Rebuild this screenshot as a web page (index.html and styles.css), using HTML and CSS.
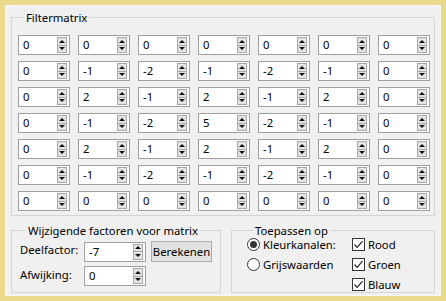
FILE: index.html
```html
<!DOCTYPE html>
<html lang="nl">
  <head>
    <meta charset="UTF-8" />
    <meta name="viewport" content="width=device-width, initial-scale=1.0" />
    <title>Door gebruiker gedefinieerd filter</title>
    <link rel="stylesheet" href="styles.css">
  </head>
  <body>
    <div class="dialog">
      <div class="group matrix-group">
        <div class="group-label">Filtermatrix</div>
        <div class="matrix" id="matrix"></div>
      </div>

      <div class="bottom">
        <div class="group factors">
          <div class="group-label">Wijzigende factoren voor matrix</div>
          <div class="form-row">
            <span class="field-label">Deelfactor:</span>
            <div class="spin wide">
              <span class="val">-7</span>
              <span class="arrows"><i class="up"></i><i class="down"></i></span>
            </div>
            <button class="btn">Berekenen</button>
          </div>
          <div class="form-row second">
            <span class="field-label">Afwijking:</span>
            <div class="spin wide">
              <span class="val">0</span>
              <span class="arrows"><i class="up"></i><i class="down"></i></span>
            </div>
          </div>
        </div>

        <div class="group apply">
          <div class="group-label">Toepassen op</div>
          <div class="apply-grid">
            <label class="opt"><span class="radio checked"></span>Kleurkanalen:</label>
            <label class="opt"><span class="check"><svg viewBox="0 0 11 11" width="11" height="11"><polyline points="1.5,5.5 4.2,8.3 9.5,2.2" /></svg></span>Rood</label>
            <label class="opt"><span class="radio"></span>Grijswaarden</label>
            <label class="opt"><span class="check"><svg viewBox="0 0 11 11" width="11" height="11"><polyline points="1.5,5.5 4.2,8.3 9.5,2.2" /></svg></span>Groen</label>
            <span></span>
            <label class="opt"><span class="check"><svg viewBox="0 0 11 11" width="11" height="11"><polyline points="1.5,5.5 4.2,8.3 9.5,2.2" /></svg></span>Blauw</label>
          </div>
        </div>
      </div>
    </div>

    <script>
      // 7x7 kernel values, row by row
      const values = [
        [0, 0, 0, 0, 0, 0, 0],
        [0, -1, -2, -1, -2, -1, 0],
        [0, 2, -1, 2, -1, 2, 0],
        [0, -1, -2, 5, -2, -1, 0],
        [0, 2, -1, 2, -1, 2, 0],
        [0, -1, -2, -1, -2, -1, 0],
        [0, 0, 0, 0, 0, 0, 0],
      ];

      const matrix = document.getElementById("matrix");
      values.forEach((row) => {
        row.forEach((v) => {
          const cell = document.createElement("div");
          cell.className = "spin";
          cell.innerHTML = `
            <span class="val">${v}</span>
            <span class="arrows"><i class="up"></i><i class="down"></i></span>
          `;
          matrix.appendChild(cell);
        });
      });
    </script>
  </body>
</html>
```

FILE: styles.css
```css
body {
  margin: 0;
  padding: 5px;
  background-color: #ebd98b;
  font-family: "Noto Sans", "Liberation Sans", sans-serif;
  font-size: 11.3px;
  color: #000;
}
.dialog {
  width: 436px;
  height: 291px;
  box-sizing: border-box;
  padding: 11px 5px 0 6px;
  background-color: #f0f0f0;
  border: 1px solid #f8f8f8;
}
.group {
  border: 1px solid #d5d5d5;
  box-sizing: border-box;
}
.group-label {
  width: fit-content;
  margin: -8px 0 0 6px;
  padding: 0 2px;
  line-height: 16px;
  background-color: #f0f0f0;
}
.matrix-group {
  margin-left: -1px;
  padding: 0 4px 4px 6px;
}
.matrix {
  display: grid;
  grid-template-columns: repeat(7, 52px);
  grid-auto-rows: 20px;
  column-gap: 8px;
  row-gap: 6px;
  margin-top: 9px;
}
.spin {
  display: flex;
  height: 20px;
  box-sizing: border-box;
  border: 1px solid #a0a0a0;
  background-color: #fff;
}
.spin.wide {
  width: 62px;
}
.val {
  flex: 1;
  padding-left: 4px;
  line-height: 17px;
}
.arrows {
  display: flex;
  flex-direction: column;
  width: 10px;
  margin: 1px 2px 1px 0;
  border: 1px solid #a8a8a8;
  box-sizing: border-box;
  background-color: #e4e4e4;
}
.arrows i {
  flex: 1;
  display: flex;
  align-items: center;
  justify-content: center;
}
.arrows i.down {
  border-top: 1px solid #a8a8a8;
}
.arrows i::before {
  content: "";
  width: 0;
  height: 0;
  border-left: 3px solid transparent;
  border-right: 3px solid transparent;
}
.arrows i.up::before {
  border-bottom: 3px solid #111;
}
.arrows i.down::before {
  border-top: 3px solid #111;
}
.bottom {
  display: flex;
  gap: 10px;
  margin-top: 14px;
  margin-left: -1px;
}
.factors {
  width: 211px;
  height: 63px;
  padding: 0 0 0 8px;
}
.form-row {
  display: flex;
  align-items: center;
  margin-top: 2px;
}
.form-row.second {
  margin-top: 4px;
}
.field-label {
  width: 64px;
  padding-bottom: 4px;
}
.btn {
  margin-left: 5px;
  width: 61px;
  height: 21px;
  padding: 0;
  font: inherit;
  color: #000;
  background-color: #e1e1e1;
  border: 1px solid #adadad;
}
.apply {
  width: 205px;
  height: 63px;
  padding: 0 0 0 15px;
}
.apply-grid {
  display: grid;
  grid-template-columns: 105px auto;
  grid-auto-rows: 20px;
  margin-top: -4px;
}
.opt {
  display: flex;
  align-items: center;
  gap: 3px;
  padding-bottom: 1px;
}
.radio {
  width: 13px;
  height: 13px;
  box-sizing: border-box;
  border: 1px solid #333;
  border-radius: 50%;
  background-color: #fff;
  display: flex;
  align-items: center;
  justify-content: center;
}
.radio.checked::after {
  content: "";
  width: 7px;
  height: 7px;
  border-radius: 50%;
  background-color: #333;
}
.check {
  width: 13px;
  height: 13px;
  box-sizing: border-box;
  border: 1px solid #333;
  background-color: #fff;
  display: flex;
}
.check polyline {
  fill: none;
  stroke: #222;
  stroke-width: 1.2;
}
```
